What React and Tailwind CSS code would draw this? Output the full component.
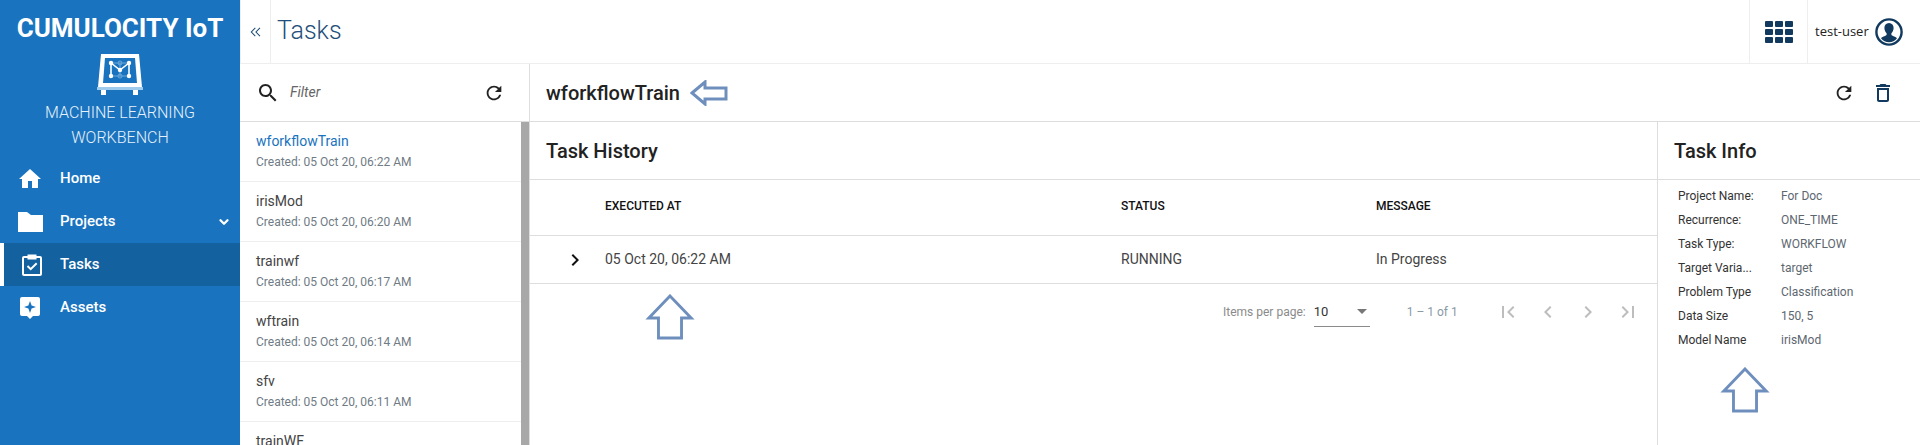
import { ChevronDown } from 'lucide-react'

const tasks = [
  { name: 'wforkflowTrain', created: 'Created: 05 Oct 20, 06:22 AM', active: true },
  { name: 'irisMod', created: 'Created: 05 Oct 20, 06:20 AM' },
  { name: 'trainwf', created: 'Created: 05 Oct 20, 06:17 AM' },
  { name: 'wftrain', created: 'Created: 05 Oct 20, 06:14 AM' },
  { name: 'sfv', created: 'Created: 05 Oct 20, 06:11 AM' },
  { name: 'trainWF' },
]

const info = [
  ['Project Name:', 'For Doc'],
  ['Recurrence:', 'ONE_TIME'],
  ['Task Type:', 'WORKFLOW'],
  ['Target Varia...', 'target'],
  ['Problem Type', 'Classification'],
  ['Data Size', '150, 5'],
  ['Model Name', 'irisMod'],
]

// material icon paths, 24x24 box
const paths = {
  search: 'M15.5 14h-.79l-.28-.27C15.410 12.590 16 11.110 16 9.500 16 5.910 13.090 3 9.500 3S3 5.910 3 9.500 5.910 16 9.500 16c1.610 0 3.090-.59 4.230-1.570l.27.28v.79l5 4.990L20.490 19l-4.990-5zm-6 0C7.010 14 5 11.990 5 9.500S7.010 5 9.500 5 14 7.010 14 9.500 11.990 14 9.500 14z',
  refresh: 'M17.650 6.350C16.200 4.900 14.210 4 12 4c-4.420 0-7.990 3.580-7.990 8s3.570 8 7.990 8c3.730 0 6.840-2.550 7.730-6h-2.080c-.82 2.330-3.040 4-5.650 4-3.310 0-6-2.690-6-6s2.690-6 6-6c1.660 0 3.140.69 4.220 1.780L13 11h7V4l-2.350 2.350z',
  trash: 'M6 19c0 1.100.9 2 2 2h8c1.100 0 2-.9 2-2V7H6v12zM8 9h8v10H8V9zm7.500-5-1-1h-5l-1 1H5v2h14V4h-3.500z',
  first: 'M18.410 16.590 13.820 12l4.590-4.590L17 6l-6 6 6 6 1.410-1.410zM6 6h2v12H6V6z',
  prev: 'M15.410 7.410 14 6l-6 6 6 6 1.410-1.410L10.830 12l4.580-4.590z',
  next: 'M10 6 8.590 7.410 13.170 12l-4.580 4.590L10 18l6-6-6-6z',
  last: 'M5.590 7.410 10.180 12l-4.590 4.590L7 18l6-6-6-6-1.410 1.410zM16 6h2v12h-2V6z',
  doubleLeft: 'M11.500 6.500 10.400 5.400 3.800 12l6.600 6.600 1.100-1.100L6 12zM18.500 6.500l-1.100-1.100-6.600 6.600 6.600 6.600 1.100-1.100L13 12z',
}

function Mi({ name, size = 24, className }) {
  return (
    <svg width={size} height={size} viewBox="0 0 24 24" fill="currentColor" className={className}>
      <path d={paths[name]} />
    </svg>
  )
}

function Logo() {
  return (
    <svg width="48" height="43" viewBox="0 0 48 43">
      <path d="M5 1h38l3 33H2z" fill="#fff" />
      <path d="M9 5h30l2 25H7z" fill="#1a73be" />
      <rect x="1" y="34" width="46" height="3" fill="#9fcbec" />
      <rect x="5" y="37" width="5" height="5" fill="#fff" />
      <rect x="37" y="37" width="5" height="5" fill="#fff" />
      <path d="M15 10v13M33 10v13M15 10h18M24 10v13M15 23h18" fill="none" stroke="#6aa9dc" strokeWidth="1" />
      <path d="M15 23V10l9 7 9-7v13" fill="none" stroke="#fff" strokeWidth="1.500" />
      {[[15, 10], [33, 10], [24, 17], [15, 23], [33, 23]].map(([x, y]) => (
        <circle key={x + '-' + y} cx={x} cy={y} r="2.200" fill="#fff" />
      ))}
      {[[24, 10], [24, 23]].map(([x, y]) => (
        <circle key={x + '-' + y} cx={x} cy={y} r="2" fill="none" stroke="#6aa9dc" />
      ))}
    </svg>
  )
}

function HomeIcon() {
  return (
    <svg width="22" height="20" viewBox="0 0 22 20" fill="#fff">
      <path d="M11 0 0 10h3v9h6v-7h4v7h6v-9h3z" />
    </svg>
  )
}

function FolderIcon() {
  return (
    <svg width="25" height="20" viewBox="0 0 25 20" fill="#fff">
      <path d="M0 0h9l4 3h12v17H0z" />
    </svg>
  )
}

function TasksIcon() {
  return (
    <svg width="20" height="22" viewBox="0 0 20 22" fill="none" stroke="#fff">
      <path d="M6 3H2a1 1 0 0 0-1 1v16a1 1 0 0 0 1 1h16a1 1 0 0 0 1-1V4a1 1 0 0 0-1-1h-4" strokeWidth="2" />
      <rect x="6" y="1" width="8" height="4" fill="#fff" strokeWidth="1" />
      <path d="m5.500 12 3.200 3.200 6-6" strokeWidth="2" />
    </svg>
  )
}

function AssetsIcon() {
  return (
    <svg width="20" height="22" viewBox="0 0 20 22">
      <path d="M2 0h16a2 2 0 0 1 2 2v15a2 2 0 0 1-2 2h-5l-3 3-3-3H2a2 2 0 0 1-2-2V2a2 2 0 0 1 2-2z" fill="#fff" />
      <path d="m10 4 1.600 4.400L16 10l-4.400 1.600L10 16l-1.600-4.400L4 10l4.400-1.600z" fill="#1a73be" />
    </svg>
  )
}

function NavItem({ icon, label, active, caret }) {
  return (
    <div className={`flex h-[43px] items-center ${active ? 'border-l-4 border-white bg-[#13619f]' : ''}`}>
      <div className={`flex justify-center ${active ? 'w-[56px]' : 'w-[60px]'}`}>{icon}</div>
      <span className="flex-1 text-[15px] font-medium text-white">{label}</span>
      {caret && <ChevronDown className="mr-[9px] h-[14px] w-[14px] text-white" strokeWidth={4} />}
    </div>
  )
}

// the blue outlined arrows drawn on top of the screenshot
function UpArrow({ className }) {
  return (
    <svg className={className} width="50" height="46" viewBox="0 0 50 46" fill="#fff" stroke="#6e8fbd" strokeWidth="3">
      <path d="M25 2 47 24H37V44H13V24H3z" transform="translate(1 0) scale(.96 1)" />
    </svg>
  )
}

function LeftArrow({ className }) {
  return (
    <svg className={className} width="38" height="26" viewBox="0 0 38 26" fill="#fff" stroke="#6e8fbd" strokeWidth="3">
      <path d="M2 13 15 2v6h21v11H15v5z" />
    </svg>
  )
}

function UserIcon() {
  return (
    <svg width="28" height="28" viewBox="0 0 28 28">
      <circle cx="14" cy="14" r="12.600" fill="#fff" stroke="#123a5e" strokeWidth="2.400" />
      <path d="M14 5c3 0 4.600 2.200 4.600 5 0 2-1 4-2.200 5.200v1.600c0 1 3.800 1.600 5.600 3.400a10 10 0 0 1-16 0c1.800-1.800 5.600-2.400 5.600-3.400v-1.600C10.400 14 9.400 12 9.400 10c0-2.800 1.600-5 4.600-5z" fill="#123a5e" />
    </svg>
  )
}

export default function App() {
  return (
    <div className="flex h-[445px] w-full overflow-hidden bg-white font-['Roboto',sans-serif] text-[#333]">
      <aside className="w-[240px] shrink-0 bg-[#1a73be]">
        <div className="flex flex-col items-center pt-[12px]">
          <div className="text-[26px] font-bold leading-[33px] text-white">CUMULOCITY IoT</div>
          <div className="mt-[8px] h-[43px]"><Logo /></div>
          <div className="mt-[4px] text-center text-[16px] font-light leading-[25px] text-[#e6f2fb]">
            <div>MACHINE LEARNING</div>
            <div>WORKBENCH</div>
          </div>
        </div>
        <nav className="mt-[7px]">
          <NavItem icon={<HomeIcon />} label="Home" />
          <NavItem icon={<FolderIcon />} label="Projects" caret />
          <NavItem icon={<TasksIcon />} label="Tasks" active />
          <NavItem icon={<AssetsIcon />} label="Assets" />
        </nav>
      </aside>

      <div className="flex min-w-0 flex-1 flex-col">
        <header className="flex h-[64px] shrink-0 items-center border-b border-[#eeeeee]">
          <div className="flex h-full w-[31px] items-center justify-center border-r border-l border-[#eeeeee]">
            <Mi name="doubleLeft" size={16} className="text-[#1f4f7a]" />
          </div>
          <h1 className="ml-[6px] flex-1 pb-[2px] text-[25px] font-light leading-none text-[#1f4f7a]">Tasks</h1>
          <div className="flex h-full w-[58px] items-center justify-center border-l border-[#eeeeee]">
            <div className="grid grid-cols-3 gap-[2px]">
              {Array.from({ length: 9 }).map((_, i) => (
                <span key={i} className="h-[6px] w-[8px] rounded-[1px] bg-[#123a5e]" />
              ))}
            </div>
          </div>
          <div className="flex h-full w-[113px] items-center border-l border-[#eeeeee] pl-[7px]">
            <span className="mr-[6px] font-['Open_Sans',sans-serif] text-[13px] text-[#222]">test-user</span>
            <UserIcon />
          </div>
        </header>

        <div className="flex min-h-0 flex-1">
          <div className="flex w-[290px] shrink-0 flex-col border-r border-[#dddddd]">
            <div className="flex h-[58px] shrink-0 items-center border-b border-[#dddddd] pr-[24px] pl-[16px]">
              <Mi name="search" size={24} className="text-[#222]" />
              <span className="ml-[10px] flex-1 text-[14px] text-[#666] italic">Filter</span>
              <Mi name="refresh" size={22} className="text-[#222]" />
            </div>
            <div className="flex min-h-0 flex-1">
              <ul className="min-w-0 flex-1 overflow-hidden">
                {tasks.map((t) => (
                  <li key={t.name} className="h-[60px] border-b border-[#eeeeee] pt-[9px] pl-[16px]">
                    <div className={`text-[14px] leading-[20px] ${t.active ? 'text-[#1a73be]' : 'text-[#444]'}`}>{t.name}</div>
                    {t.created && <div className="mt-[1px] text-[12px] leading-[20px] text-[#6f7b85]">{t.created}</div>}
                  </li>
                ))}
              </ul>
              <div className="w-[8px] shrink-0 bg-[#a8a8a8]" />
            </div>
          </div>

          <div className="flex min-w-0 flex-1 flex-col">
            <div className="flex h-[58px] shrink-0 items-center border-b border-[#dddddd] pr-[25px] pl-[16px]">
              <span className="text-[20px] leading-none font-medium text-[#222]">wforkflowTrain</span>
              <LeftArrow className="ml-[10px]" />
              <div className="flex-1" />
              <Mi name="refresh" size={22} className="text-[#222]" />
              <Mi name="trash" size={24} className="ml-[16px] text-[#123a5e]" />
            </div>

            <div className="flex min-h-0 flex-1">
              <section className="relative min-w-0 flex-1">
                <div className="flex h-[58px] items-center border-b border-[#dddddd] pl-[16px] text-[20px] font-medium text-[#222]">Task History</div>
                <div className="flex h-[56px] items-center border-b border-[#dddddd] pb-[3px] text-[12px] font-medium text-[#111]">
                  <span className="ml-[75px] w-[516px]">EXECUTED AT</span>
                  <span className="w-[255px]">STATUS</span>
                  <span>MESSAGE</span>
                </div>
                <div className="flex h-[48px] items-center border-b border-[#dddddd] text-[14px] text-[#444]">
                  <Mi name="next" size={24} className="ml-[33px] text-[#111]" />
                  <span className="ml-[18px] w-[516px]">05 Oct 20, 06:22 AM</span>
                  <span className="w-[255px]">RUNNING</span>
                  <span>In Progress</span>
                </div>
                <div className="flex h-[56px] items-center text-[12px] text-[#8a8a8a]">
                  <span className="ml-[693px]">Items per page:</span>
                  <div className="ml-[8px] flex h-[30px] w-[56px] items-center justify-between border-b border-[#8a8a8a] pr-[3px] text-[13px] text-[#333]">
                    <span>10</span>
                    <span className="h-0 w-0 border-x-[5px] border-t-[5px] border-x-transparent border-t-[#777]" />
                  </div>
                  <span className="ml-[37px] text-[#8a9aa5]">1 – 1 of 1</span>
                  <div className="ml-[38px] flex items-center gap-[16px] text-[#bdbdbd]">
                    <Mi name="first" size={24} />
                    <Mi name="prev" size={24} />
                    <Mi name="next" size={24} />
                    <Mi name="last" size={24} />
                  </div>
                </div>
                <UpArrow className="absolute top-[172px] left-[115px]" />
              </section>

              <section className="relative w-[263px] shrink-0 border-l border-[#dddddd]">
                <div className="flex h-[58px] items-center border-b border-[#dddddd] pl-[16px] text-[20px] font-medium text-[#222]">Task Info</div>
                <div className="pt-[4px] pl-[20px] text-[12px]">
                  {info.map(([k, v]) => (
                    <div key={k} className="flex h-[24px] items-center">
                      <span className="w-[103px] text-[#333]">{k}</span>
                      <span className="text-[#5d6770]">{v}</span>
                    </div>
                  ))}
                </div>
                <UpArrow className="absolute top-[245px] left-[62px]" />
              </section>
            </div>
          </div>
        </div>
      </div>
    </div>
  )
}
